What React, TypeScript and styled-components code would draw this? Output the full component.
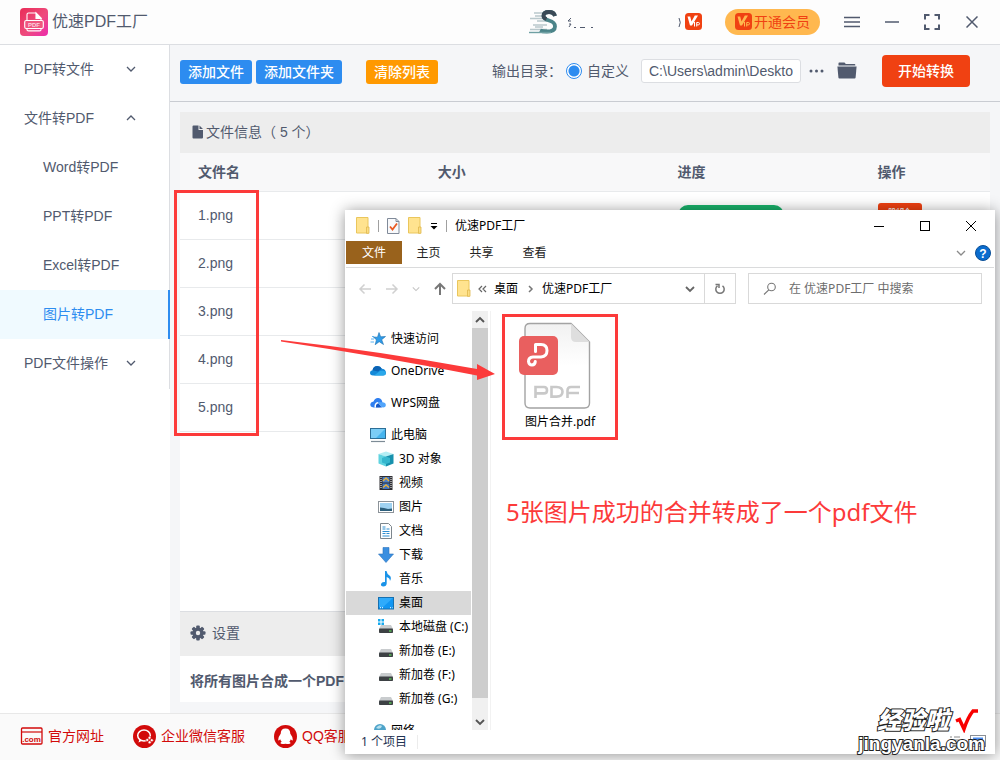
import React from "react";
import styled, { createGlobalStyle, css } from "styled-components";

const RED = "#fc3a3a";
const INK = "#515a6e";

const GlobalStyle = createGlobalStyle`
  *, *::before, *::after { box-sizing: border-box; }
  body {
    margin: 0;
    background: #f5f6f8;
    color: ${INK};
    font-family: "Liberation Sans", "Noto Sans CJK SC", sans-serif;
    font-size: 14px;
    line-height: 20px;
  }
  button, input { font: inherit; color: inherit; }
  button { background: none; border: 0; padding: 0; cursor: pointer; }
  svg { display: block; flex: none; }
  h1, h2, p, ul { margin: 0; padding: 0; font: inherit; }
  ul { list-style: none; }
`;

/* ---------- application shell ---------- */

const Shell = styled.div`
  position: relative;
  min-height: 100vh;
  display: flex;
  flex-direction: column;
  overflow: hidden;
`;

const TitleBar = styled.header`
  display: flex;
  align-items: center;
  height: 45px;
  padding: 0 8px 1px 20px;
  background: #fdfdfd;
  border-bottom: 1px solid #dcdee2;
`;

const AppName = styled.h1`
  margin-left: 4px;
  font-size: 16px;
  line-height: 24px;
`;

const Account = styled.div`
  display: flex;
  align-items: center;
  margin-left: auto;
`;

const VipButton = styled.button`
  display: flex;
  align-items: center;
  gap: 2px;
  height: 26px;
  margin: 0 12px 0 23px;
  padding: 0 10px;
  border-radius: 13px;
  background: #ffb84f;
  color: #f04112;
  white-space: nowrap;
`;

const WindowButton = styled.button<{ $w?: number; $ink?: string }>`
  display: flex;
  align-items: center;
  justify-content: center;
  width: ${(p) => p.$w ?? 40}px;
  height: 30px;
  color: ${(p) => p.$ink ?? INK};
`;

const Body = styled.div`
  flex: 1;
  display: flex;
`;

const Sidebar = styled.aside`
  width: 170px;
  flex: none;
  background: #fff;
`;

const Menu = styled.nav`
  height: 344px;
  border-right: 1px solid #dcdee2;
`;

const MenuGroup = styled.button`
  display: flex;
  align-items: center;
  justify-content: space-between;
  width: 100%;
  height: 49px;
  padding: 0 33px 2px 24px;
`;

const MenuLink = styled.a<{ $active?: boolean }>`
  display: flex;
  align-items: center;
  height: 49px;
  padding: 0 0 2px 43px;
  color: inherit;
  text-decoration: none;
  ${(p) =>
    p.$active &&
    css`
      margin-right: -1px;
      border-right: 2px solid #2d8cf0;
      background: #f0faff;
      color: #2d8cf0;
    `}
`;

const Main = styled.main`
  flex: 1;
  min-width: 0;
  display: flex;
  flex-direction: column;
`;

const Toolbar = styled.div`
  display: flex;
  align-items: center;
  height: 57px;
  padding: 0 30px 3px 10px;
  border-bottom: 1px solid #c9ccd2;
  white-space: nowrap;
`;

const Actions = styled.div`
  display: flex;
  gap: 4px;
  margin-right: 24px;
`;

const SmallButton = styled.button<{ $bg: string }>`
  height: 24px;
  padding: 0 8px;
  border-radius: 3px;
  background: ${(p) => p.$bg};
  color: #fff;
  font-weight: 500;
`;

const Output = styled.div`
  display: flex;
  align-items: center;
  margin-left: auto;
  padding-bottom: 2px;
`;

const RadioLabel = styled.label`
  display: flex;
  align-items: center;
  gap: 5px;
  margin: 0 12px 0 4px;
`;

const Radio = styled.input`
  appearance: none;
  width: 16px;
  height: 16px;
  margin: 0;
  border: 1px solid #2d8cf0;
  border-radius: 50%;
  background: radial-gradient(circle, #2d8cf0 5px, #fff 6px);
`;

const PathInput = styled.input`
  width: 160px;
  height: 24px;
  padding: 0 7px;
  border: 1px solid #dcdee2;
  border-radius: 3px;
  background: #fff;
  outline: 0;
`;

const IconButton = styled.button<{ $gap: number }>`
  margin-left: ${(p) => p.$gap}px;
`;

const StartButton = styled.button`
  height: 32px;
  margin-left: 25px;
  padding: 0 16px;
  border-radius: 4px;
  background: #f04112;
  color: #fff;
  font-weight: 500;
`;

const Panel = styled.section`
  flex: 1;
  display: flex;
  flex-direction: column;
  margin: 10px 10px 11px;
  background: #fff;
`;

const PanelHead = styled.h2<{ $h: number; $line?: boolean }>`
  display: flex;
  align-items: center;
  gap: ${(p) => (p.$line ? 6 : 2)}px;
  height: ${(p) => p.$h}px;
  padding: 0 0 2px ${(p) => (p.$line ? 10 : 12)}px;
  border-top: ${(p) => (p.$line ? "1px solid #dcdee2" : "0")};
  background: #ededed;
`;

const FileTable = styled.table`
  width: 100%;
  border-spacing: 0;
  table-layout: fixed;
`;

const Th = styled.th<{ $w?: string }>`
  width: ${(p) => p.$w ?? "auto"};
  height: 39px;
  padding: 0 0 0 18px;
  border-bottom: 1px solid #e8eaec;
  background: #f8f8f9;
  text-align: left;
`;

const Td = styled.td`
  height: 48px;
  padding: 0 0 2px 18px;
  border-bottom: 1px solid #e8eaec;
`;

const Progress = styled.div`
  width: 106px;
  height: 20px;
  border-radius: 10px;
  background: #19b26b;
`;

const DeleteButton = styled.button`
  display: block;
  height: 24px;
  padding: 0 10px;
  border-radius: 3px;
  background: #f04112;
  color: #fff;
  font-size: 12px;
`;

const Spacer = styled.div`
  flex: 1;
`;

const Option = styled.p`
  display: flex;
  align-items: center;
  height: 46px;
  padding: 4px 10px 0;
  font-weight: 700;
`;

const Footer = styled.footer`
  display: flex;
  align-items: center;
  gap: 29px;
  height: 47px;
  padding: 0 20px 2px;
  border-top: 1px solid #e8e8e8;
  background: #fafafa;
`;

const FooterLink = styled.a`
  display: flex;
  align-items: center;
  gap: 5px;
  color: #d20a0a;
  text-decoration: none;
`;

/* ---------- explorer window ---------- */

const Explorer = styled.section`
  position: absolute;
  left: 345px;
  right: 5px;
  top: 210px;
  bottom: 6px;
  display: flex;
  flex-direction: column;
  padding: 0 1px;
  background: #fff;
  box-shadow: 0 1px 14px rgba(0, 0, 0, 0.42);
  color: #000;
  font-family: "Noto Sans", "Noto Sans CJK SC", sans-serif;
  font-size: 12px;
  line-height: 16px;
`;

const ExplorerTitle = styled.header`
  display: flex;
  align-items: center;
  gap: 8px;
  height: 31px;
  padding-left: 10px;
`;

const Bar = styled.span`
  width: 1px;
  height: 12px;
  background: #a0a0a0;
`;

const WindowControls = styled.div`
  display: flex;
  margin-left: auto;
`;

const Ribbon = styled.div`
  display: flex;
  align-items: center;
  height: 27px;
  padding-bottom: 3px;
  border-bottom: 1px solid #dadbdc;
`;

const RibbonTab = styled.button<{ $file?: boolean }>`
  width: ${(p) => (p.$file ? 56 : 53)}px;
  height: 23px;
  background: ${(p) => (p.$file ? "#99621c" : "transparent")};
  color: ${(p) => (p.$file ? "#fff" : "#222")};
`;

const RibbonEnd = styled.div`
  display: flex;
  align-items: center;
  gap: 9px;
  margin-left: auto;
  padding-right: 3px;
`;

const AddressRow = styled.div`
  display: flex;
  align-items: center;
  height: 41px;
  padding: 0 12px 0 10px;
`;

const NavButtons = styled.div`
  display: flex;
  align-items: center;
  gap: 13px;
  width: 92px;
  margin-right: 4px;
  padding-left: 2px;
`;

const Address = styled.div`
  display: flex;
  flex: 1;
  align-items: center;
  gap: 7px;
  height: 31px;
  padding-left: 4px;
  border: 1px solid #d9d9d9;
`;

const Refresh = styled.button`
  display: flex;
  align-items: center;
  justify-content: center;
  width: 31px;
  height: 29px;
  margin-left: 2px;
  border-left: 1px solid #d9d9d9;
`;

const SearchBox = styled.label`
  display: flex;
  align-items: center;
  gap: 12px;
  width: 234px;
  height: 31px;
  margin-left: 12px;
  padding-left: 14px;
  border: 1px solid #d9d9d9;
`;

const SearchInput = styled.input`
  flex: 1;
  min-width: 0;
  border: 0;
  padding: 0;
  outline: 0;
  &::placeholder {
    color: #6d6d6d;
    opacity: 1;
  }
`;

const ExplorerBody = styled.div`
  flex: 1;
  min-height: 0;
  display: flex;
  padding-top: 2px;
`;

const Tree = styled.ul`
  width: 125px;
  height: 419px;
  padding-top: 16px;
  overflow: hidden;
`;

const TreeItem = styled.li<{ $child?: boolean; $gap?: boolean; $on?: boolean }>`
  display: flex;
  align-items: center;
  gap: 5px;
  height: 24px;
  margin-bottom: ${(p) => (p.$gap ? 8 : 0)}px;
  padding-left: ${(p) => (p.$child ? 32 : 24)}px;
  background: ${(p) => (p.$on ? "#d9d9d9" : "transparent")};
  white-space: nowrap;
`;

const ScrollTrack = styled.div`
  display: flex;
  flex-direction: column;
  width: 16px;
  height: 419px;
  margin: 0 2px 0 1px;
  background: #f0f0f0;
`;

const ScrollArrow = styled.button`
  display: flex;
  align-items: center;
  justify-content: center;
  height: 17px;
`;

const ScrollThumb = styled.div`
  flex: 1;
  margin-bottom: 15px;
  background: #cdcdcd;
`;

const Files = styled.div`
  flex: 1;
  padding: 3px 12px 0 11px;
  border-left: 1px solid #f2f2f2;
`;

const FileCard = styled.figure`
  display: flex;
  flex-direction: column;
  align-items: center;
  gap: 4px;
  width: 116px;
  height: 126px;
  margin: 0;
  padding-top: 5px;
  border: 3px solid ${RED};
`;

const Remark = styled.p`
  margin: 54px 0 0 4px;
  color: ${RED};
  font-size: 24px;
  line-height: 36px;
`;

const StatusBar = styled.footer`
  display: flex;
  align-items: center;
  gap: 10px;
  height: 24px;
  padding: 0 15px;
  color: #1f3352;
`;

const StatusRule = styled.span`
  width: 1px;
  height: 14px;
  background: #ececec;
`;

/* ---------- markings lying over the page ---------- */

const MarkBox = styled.div`
  position: absolute;
  left: 174px;
  top: 190px;
  width: 85px;
  height: 246px;
  border: 3px solid ${RED};
`;

const MarkArrow = styled.svg`
  position: absolute;
  left: 278px;
  top: 336px;
`;

const Watermark = styled.div`
  position: absolute;
  right: 15px;
  bottom: 6px;
  display: flex;
  flex-direction: column;
  align-items: flex-end;
  color: #fff;
  font-weight: 900;
  -webkit-text-stroke: 2px #222;
  paint-order: stroke fill;
`;

const WatermarkTop = styled.div`
  display: flex;
  align-items: center;
  gap: 6px;
  padding-right: 6px;
  font-size: 24px;
  line-height: 26px;
  font-style: italic;
`;

const WatermarkUrl = styled.div`
  font-size: 19px;
  line-height: 20px;
`;

const ViewSwitch = styled.svg`
  position: absolute;
  right: 9px;
  bottom: 7px;
`;

/* ---------- icons ---------- */

const Chevron = ({ up, size = 10, color = INK, w = 1.3 }: { up?: boolean; size?: number; color?: string; w?: number }) => (
  <svg width={size} height={size} viewBox="0 0 10 10" fill="none" stroke={color} strokeWidth={w}>
    <path d={up ? "M1 7l4-4 4 4" : "M1 3l4 4 4-4"} />
  </svg>
);

const Logo = () => (
  <svg width="28" height="28" viewBox="0 0 28 28">
    <defs>
      <linearGradient id="lg" x1="0" y1="0" x2="1" y2="1">
        <stop offset="0" stopColor="#e92c57" />
        <stop offset=".55" stopColor="#ee4b7d" />
        <stop offset="1" stopColor="#ec2cae" />
      </linearGradient>
    </defs>
    <rect width="28" height="28" rx="4" fill="url(#lg)" />
    <g fill="none" stroke="#fff" strokeWidth="1.1">
      <path d="M7 12V6.5Q7 5 8.5 5H16l5 5v2" />
      <path d="M16 5l5 5.500h-5z" fill="#fff" />
      <rect x="4.700" y="12.500" width="18.600" height="8" rx="1.500" fill="#f0567f" />
      <path d="M7 20.500v1.200q0 1.200 1.500 1.200h11q1.500 0 1.500-1.200v-1.200" />
    </g>
    <text x="14" y="18.800" fontSize="6" fontWeight="700" textAnchor="middle" fill="#fbd3df" fontFamily="Liberation Sans">PDF</text>
  </svg>
);

const Avatar = () => (
  <svg width="30" height="30" viewBox="0 0 30 30" fill="none">
    <path d="M5 6h13M1 11.500h15M6 9h9M8 14h10M4 18h14M1 22.500h17M6 20h8" stroke="#b9c8cc" strokeWidth="1.300" />
    <path d="M26 9q-1-4-6-4-5.500 0-5.500 4 0 3 5.500 4.500 6 1.500 6 6 0 5-8 5-5 0-7-1" stroke="#4b8489" strokeWidth="3.800" />
    <path d="M26 9q-1-4-6-4-5.500 0-5.500 4 0 2 3 3" stroke="#3a4a57" strokeWidth="3.800" />
    <path d="M0 25.500h22" stroke="#6fa0a3" strokeWidth="1.400" />
  </svg>
);

const UserName = () => (
  <svg width="126" height="20" viewBox="0 0 126 20" fill="none" stroke={INK} strokeWidth="1">
    <path d="M12 6l-3 3M9 9h3M10 12h2l-2 3M15 15.500h2M21 15.500h5M32 15.500h2" />
    <path d="M120 6q2.500 4.500 0 9" />
  </svg>
);

const VipMark = ({ fg = "#fff" }: { fg?: string }) => (
  <svg width="17" height="17" viewBox="0 0 17 17">
    <rect width="17" height="17" rx="3.500" fill="#f04112" />
    <path d="M2.500 3.500h2.700l1.300 5L9.800 2.500H13L7 12.500H5z" fill={fg} />
    <path d="M9.500 9v4.500M11.700 13.500V9.500h1.600q1.200 0 1.200 1.200t-1.200 1.200h-1.600" stroke={fg} strokeWidth="1" fill="none" />
  </svg>
);

const FolderDark = () => (
  <svg width="20" height="17" viewBox="0 0 20 17" fill={INK}>
    <path d="M1.500 3V1.200Q1.500.5 2.200.5h5.300l1.300 1.500h8.700q.8 0 .8.800V3.500H1.500z" />
    <path d="M.4 4.500h19.200l-1 11q-.1 1-1 1H2.400q-.9 0-1-1z" />
  </svg>
);

const DocSolid = () => (
  <svg width="12" height="14" viewBox="0 0 12 14" fill={INK}>
    <path d="M1.500.500h5v4.500h4.500v7.500q0 1-1 1H1.500q-1 0-1-1v-11q0-1 1-1zM7.500.500L11 4H7.500z" />
  </svg>
);

const Gear = () => (
  <svg width="16" height="16" viewBox="0 0 16 16">
    <g fill={INK}>
      <circle cx="8" cy="8" r="5.500" />
      {[0, 45, 90, 135].map((a) => (
        <rect key={a} x="6.200" y="0.500" width="3.600" height="15" rx="1" transform={`rotate(${a} 8 8)`} />
      ))}
    </g>
    <circle cx="8" cy="8" r="2.200" fill="#ededed" />
  </svg>
);

const ComIcon = () => (
  <svg width="23" height="18" viewBox="0 0 23 18">
    <rect x="1.500" y="1" width="20.500" height="16" rx="1" fill="none" stroke="#d20a0a" strokeWidth="1.300" />
    <path d="M1.500 5h20.500" stroke="#d20a0a" strokeWidth="1.200" />
    <text x="11.500" y="14.500" fontSize="8" fontWeight="700" textAnchor="middle" fill="#d20a0a" fontFamily="Liberation Sans">.com</text>
  </svg>
);

const WeComIcon = () => (
  <svg width="23" height="23" viewBox="0 0 23 23">
    <circle cx="11.500" cy="11.500" r="11.500" fill="#d20a0a" />
    <ellipse cx="11" cy="10.500" rx="6.300" ry="5.500" fill="none" stroke="#fff" strokeWidth="1.500" />
    <path d="M6.500 14l-1 3.500 3.500-1.800z" fill="#fff" />
    <g fill="#fff" stroke="#d20a0a" strokeWidth=".6">
      <circle cx="16.500" cy="12.800" r="1.500" />
      <circle cx="14.200" cy="15" r="1.500" />
      <circle cx="18.800" cy="15.200" r="1.500" />
      <circle cx="16.600" cy="17.300" r="1.500" />
    </g>
  </svg>
);

const QQIcon = () => (
  <svg width="23" height="23" viewBox="0 0 23 23">
    <circle cx="11.500" cy="11.500" r="11.500" fill="#d20a0a" />
    <path
      d="M11.500 3.500q-4.800 0-4.800 5.300-2.500 3.200-2.500 6 0 1.700 2-.600.500 1.800 1.500 2.600-1.500.600-1.200 1.500.400 1.200 5 .500 4.600.700 5-.500.300-.900-1.200-1.500 1-.800 1.500-2.600 2 2.300 2 .600 0-2.800-2.500-6 0-5.300-4.800-5.300z"
      fill="#fff"
    />
  </svg>
);

const YellowFolder = () => (
  <svg width="14" height="17" viewBox="0 0 14 17">
    <path d="M.5.500h11.500v15.500H.5z" fill="#ffe38f" stroke="#eac65c" />
    <path d="M10.500 10h2.500v6.300h-2.500z" fill="#fbdd84" stroke="#dfb84b" strokeWidth=".8" />
  </svg>
);

const CheckDoc = () => (
  <svg width="13" height="16" viewBox="0 0 13 16" fill="none">
    <path d="M.5.500h8.500l3 3v12H.5z" fill="#f8f9fb" stroke="#808a99" />
    <path d="M9 .500v3h3" stroke="#808a99" />
    <path d="M3 8.500l2.500 3 4.500-6" stroke="#ea5a22" strokeWidth="1.800" />
  </svg>
);

const Arrow = ({ kind, color }: { kind: "left" | "right" | "up"; color: string }) => {
  const d = {
    left: "M13 7H2M6.500 2.500L2 7l4.500 4.500",
    right: "M1 7h11M7.500 2.500L12 7l-4.500 4.500",
    up: "M7 13V2M2 7L7 2l5 5",
  }[kind];
  return (
    <svg width="14" height="14" viewBox="0 0 14 14" fill="none" stroke={color} strokeWidth={kind === "up" ? 2 : 1.500}>
      <path d={d} />
    </svg>
  );
};

const drive = (
  <>
    <path d="M3 6h10l2 4H1z" fill="#c9ccce" />
    <rect x="1" y="9.500" width="14" height="4.500" rx=".8" fill="#3d4144" />
    <path d="M11 12h2.500" stroke="#5fdc5a" strokeWidth="1.200" />
  </>
);

const treeIcons: Record<string, React.ReactNode> = {
  star: (
    <>
      <path d="M9 1.500l1.700 4.300 4.800-.300-3.800 3.200 1.800 4.800-4.300-2.800-4 3 1.200-4.800L3.500 6l4 .2z" fill="#2f9be8" stroke="#1b6fae" strokeWidth=".6" />
      <path d="M1 8h3M.5 11h3.500M2 5.500h2" stroke="#5cb3f0" />
    </>
  ),
  onedrive: (
    <>
      <path d="M3 12.500Q0 12.500 0 9.800 0 7.500 2.500 7.200 3.500 3 7.500 3q3 0 4.300 2.800Q15.500 6 16 9.500q0 3-3 3z" fill="#1489d8" />
      <path d="M2.500 7.200Q3.500 3 7.500 3q3 0 4.300 2.800L8 8.500z" fill="#0c63b4" />
      <path d="M4 12.500l6-4.500q5-1 6 1.800 0 2.700-3 2.700z" fill="#2aa8ea" />
    </>
  ),
  wps: (
    <>
      <path d="M3.500 12.500Q0 12 .3 9 1 6.500 3.500 6.500 5 2.500 8.500 3q3.500.5 4 5l-3 4.500z" fill="#2f7ff0" />
      <path d="M4.500 12.500Q4 7.500 8 7l4.500 5.500z" fill="#fff" />
      <path d="M6 12.500Q5.500 8.500 8.500 8.200l3.500 4.300z" fill="#1659c8" />
      <path d="M8 7q1.500-.8 2.800.3 4.800-.8 5 2.500.2 2.700-2.800 2.700-2.200 0-3.300-2.700z" fill="#52a5fb" />
    </>
  ),
  pc: (
    <>
      <rect x=".5" y="1.500" width="15" height="10" fill="#46b4ee" stroke="#2c6e96" />
      <path d="M1 2h14L6 11H1z" fill="#7bcdf6" />
      <path d="M1 14.500h14" stroke="#7d8b96" strokeWidth="1.200" />
    </>
  ),
  cube: (
    <>
      <path d="M8 .5l7.500 2.500L8 5.500.5 3z" fill="#b4eef4" />
      <path d="M.5 3L8 5.500v10L.5 12.500z" fill="#5fd3e0" />
      <path d="M15.500 3L8 5.500v10l7.500-3z" fill="#1791ad" />
      <path d="M8 5.500L4 7v4.500l4 1.500 4-1.500V7z" fill="#35b6cd" />
    </>
  ),
  film: (
    <>
      <rect x="1.500" y="1" width="13" height="14" fill="#2e2e33" />
      <rect x="4.500" y="2" width="7" height="5.500" fill="#4a7ec9" />
      <rect x="4.500" y="8.500" width="7" height="5.500" fill="#3f74c2" />
      <path d="M5 6l3-3 3 3M5 12.500l3-2.500 3 2.500" stroke="#e8b23a" strokeWidth="1.400" fill="none" />
      <path d="M3 2v12M13 2v12" stroke="#fff" strokeDasharray="1 1" />
    </>
  ),
  photo: (
    <>
      <rect x=".5" y="2.500" width="15" height="11" fill="#fff" stroke="#8c9399" />
      <rect x="2" y="4" width="12" height="8" fill="#9fd2f1" />
      <path d="M2 8.500l4 .5 4 1 4-.500V12H2z" fill="#2c5f7c" />
    </>
  ),
  doc: (
    <>
      <path d="M2.500.500h8l3 3v12h-11z" fill="#fff" stroke="#7d868d" />
      <path d="M4.500 4h3M8.500 6h3M4.500 6h3M4.500 8.500h7M4.500 10.500h3M8.500 10.500h3M4.500 13h7" stroke="#2f8fd2" strokeWidth="1.200" />
    </>
  ),
  down: <path d="M5 .5h6V7h4.500L8 15.500.5 7H5z" fill="#3a8fe0" stroke="#2c74bd" strokeWidth=".6" />,
  music: <path d="M7 0h1.500q.5 3 3 4.500 2.500 2 .5 5.500 0-3-3.300-4v6.500q-.2 3-3.400 3-2.800-.2-2.300-2.500.8-2.500 4-2z" fill="#1a93e8" />,
  desk: (
    <>
      <rect x=".5" y="2.500" width="15" height="11.500" fill="#1296f2" stroke="#1670b0" />
      <path d="M1 3h14L5 12H1z" fill="#2fabfb" />
      <path d="M2 12.700h3M12 12.700h2.500" stroke="#fff" strokeDasharray="1 1" />
    </>
  ),
  winDrive: (
    <>
      {drive}
      <path d="M0 0h2.500v2.500H0zM3.500 0H6v2.500H3.500zM0 3.500h2.500V6H0zM3.500 3.500H6V6H3.500z" fill="#17a9ee" />
    </>
  ),
  drive,
  net: (
    <>
      <circle cx="10" cy="7" r="6" fill="#4da3c9" />
      <path d="M6 5q3-4 6-2-1 4-6 2z" fill="#b7e0ee" />
      <path d="M0 8h8v5H0z" fill="#3b6f94" />
    </>
  ),
};

const TreeIcon = ({ name }: { name: string }) => (
  <svg width="16" height="16" viewBox="0 0 16 16">{treeIcons[name]}</svg>
);

const PdfFileIcon = () => (
  <svg width="84" height="88" viewBox="0 0 84 88" fill="none">
    <defs>
      <linearGradient id="fold" x1="0" y1="0" x2="0" y2="1">
        <stop offset="0" stopColor="#f1f1f1" />
        <stop offset=".5" stopColor="#fff" />
      </linearGradient>
    </defs>
    <path d="M12 1.500h41L71.500 20v61q0 5-5 5H12q-5 0-5-5V6.500q0-5 5-5z" fill="url(#fold)" stroke="#a3a3a3" strokeWidth="1.400" />
    <path d="M53 1.500L71.500 20H58q-5 0-5-5z" fill="#dedede" />
    <rect x="1" y="14" width="39" height="39" rx="5" fill="#e95f5f" />
    <path
      d="M17.500 29.500V22.500h5.500q6 0 6 6t-6 6.500h-8q-4.500.5-4.500 4.500.5 3.500 3.500 3.500 3-.3 3.300-3.500"
      stroke="#fff"
      strokeWidth="3"
      strokeLinecap="round"
      strokeLinejoin="round"
    />
    <path
      d="M17.500 76V65H26q3 0 3 3.200t-3 3.200h-8.500M33.500 65h5q6 0 6 4.800t-6 4.800h-5zM49.500 76v-7.500q0-3.500 3.500-3.500h9M50 71h11"
      stroke="#c9c9c9"
      strokeWidth="2.600"
    />
  </svg>
);

/* ---------- data ---------- */

const files = ["1.png", "2.png", "3.png", "4.png", "5.png"];

const tree: { icon: string; label: string; child?: boolean; gap?: boolean; on?: boolean }[] = [
  { icon: "star", label: "快速访问", gap: true },
  { icon: "onedrive", label: "OneDrive", gap: true },
  { icon: "wps", label: "WPS网盘", gap: true },
  { icon: "pc", label: "此电脑" },
  { icon: "cube", label: "3D 对象", child: true },
  { icon: "film", label: "视频", child: true },
  { icon: "photo", label: "图片", child: true },
  { icon: "doc", label: "文档", child: true },
  { icon: "down", label: "下载", child: true },
  { icon: "music", label: "音乐", child: true },
  { icon: "desk", label: "桌面", child: true, on: true },
  { icon: "winDrive", label: "本地磁盘 (C:)", child: true },
  { icon: "drive", label: "新加卷 (E:)", child: true },
  { icon: "drive", label: "新加卷 (F:)", child: true },
  { icon: "drive", label: "新加卷 (G:)", child: true, gap: true },
  { icon: "net", label: "网络" },
];

/* ---------- page ---------- */

function ExplorerWindow() {
  return (
    <Explorer>
      <ExplorerTitle>
        <YellowFolder />
        <Bar />
        <CheckDoc />
        <YellowFolder />
        <svg width="8" height="8" viewBox="0 0 8 8">
          <path d="M1 1.500h6" stroke="#000" />
          <path d="M.5 4h7L4 7.500z" />
        </svg>
        <Bar />
        <span>优速PDF工厂</span>
        <WindowControls>
          <WindowButton $w={46} $ink="#000" aria-label="最小化">
            <svg width="10" height="10" stroke="currentColor"><path d="M0 5.500h10" /></svg>
          </WindowButton>
          <WindowButton $w={46} $ink="#000" aria-label="最大化">
            <svg width="10" height="10" stroke="currentColor" fill="none"><rect x=".5" y=".5" width="9" height="9" /></svg>
          </WindowButton>
          <WindowButton $w={46} $ink="#000" aria-label="关闭">
            <svg width="10" height="10" stroke="currentColor"><path d="M0 0l10 10M10 0L0 10" /></svg>
          </WindowButton>
        </WindowControls>
      </ExplorerTitle>
      <Ribbon>
        <RibbonTab $file>文件</RibbonTab>
        <RibbonTab>主页</RibbonTab>
        <RibbonTab>共享</RibbonTab>
        <RibbonTab>查看</RibbonTab>
        <RibbonEnd>
          <Chevron color="#8a8a8a" />
          <svg width="16" height="16" viewBox="0 0 16 16">
            <circle cx="8" cy="8" r="7.500" fill="#0a6cce" stroke="#0a4f97" />
            <text x="8" y="12.500" fontSize="12" fontWeight="700" textAnchor="middle" fill="#fff" fontFamily="Liberation Sans">?</text>
          </svg>
        </RibbonEnd>
      </Ribbon>
      <AddressRow>
        <NavButtons>
          <Arrow kind="left" color="#d0d0d0" />
          <Arrow kind="right" color="#d0d0d0" />
          <Chevron size={8} color="#c4c4c4" />
          <Arrow kind="up" color="#777" />
        </NavButtons>
        <Address>
          <YellowFolder />
          <svg width="9" height="8" viewBox="0 0 9 8" fill="none" stroke="#666" strokeWidth="1.200">
            <path d="M4 1L1 4l3 3M8 1L5 4l3 3" />
          </svg>
          <span>桌面</span>
          <svg width="10" height="8" viewBox="0 0 10 8" fill="none" stroke="#777" strokeWidth="1.500">
            <path d="M4 1l3 3-3 3" />
          </svg>
          <span>优速PDF工厂</span>
          <Spacer />
          <Chevron size={10} color="#666" w={1.800} />
          <Refresh aria-label="刷新">
            <svg width="12" height="12" viewBox="0 0 12 12" fill="none" stroke="#777" strokeWidth="1.500">
              <path d="M3.500 2.800a4.200 4.200 0 1 0 5 0M1.500 1.500h3.500v3.500" />
            </svg>
          </Refresh>
        </Address>
        <SearchBox>
          <svg width="14" height="14" viewBox="0 0 14 14" fill="none" stroke="#777" strokeWidth="1.100">
            <circle cx="8.500" cy="5" r="3.800" />
            <path d="M5.800 7.800L1 12.500" />
          </svg>
          <SearchInput aria-label="搜索" placeholder="在 优速PDF工厂 中搜索" />
        </SearchBox>
      </AddressRow>
      <ExplorerBody>
        <Tree>
          {tree.map((t) => (
            <TreeItem key={t.label} $child={t.child} $gap={t.gap} $on={t.on}>
              <TreeIcon name={t.icon} />
              {t.label}
            </TreeItem>
          ))}
        </Tree>
        <ScrollTrack>
          <ScrollArrow aria-label="向上滚动"><Chevron up color="#555" w={1.900} /></ScrollArrow>
          <ScrollThumb />
          <ScrollArrow aria-label="向下滚动"><Chevron color="#555" w={1.900} /></ScrollArrow>
        </ScrollTrack>
        <Files>
          <FileCard>
            <PdfFileIcon />
            <figcaption>图片合并.pdf</figcaption>
          </FileCard>
          <Remark>5张图片成功的合并转成了一个pdf文件</Remark>
        </Files>
      </ExplorerBody>
      <StatusBar>
        1 个项目
        <StatusRule />
      </StatusBar>
      <ViewSwitch width="38" height="12" viewBox="0 0 38 12" fill="none">
        <path d="M2 2h2M6 2h6M2 5h2M6 5h6M2 8h2M6 8h6" stroke="#888" />
        <rect x="22.500" y=".5" width="15" height="11" stroke="#8a8f96" />
        <rect x="25" y="2.500" width="10" height="7" fill="#4f8ff0" />
      </ViewSwitch>
    </Explorer>
  );
}

export default function App() {
  return (
    <Shell>
      <GlobalStyle />
      <TitleBar>
        <Logo />
        <AppName>优速PDF工厂</AppName>
        <Account>
          <Avatar />
          <UserName />
          <VipMark />
          <VipButton>
            <VipMark fg="#ffb84f" />
            开通会员
          </VipButton>
          <WindowButton aria-label="菜单">
            <svg width="16" height="12" stroke="currentColor" strokeWidth="1.500"><path d="M0 1.500h16M0 6h16M0 10.500h16" /></svg>
          </WindowButton>
          <WindowButton aria-label="最小化">
            <svg width="14" height="12" stroke="currentColor" strokeWidth="1.500"><path d="M0 6h14" /></svg>
          </WindowButton>
          <WindowButton aria-label="全屏">
            <svg width="16" height="16" stroke="currentColor" strokeWidth="2" fill="none">
              <path d="M1 5.500V1h4.500M10.500 1H15v4.500M15 10.500V15h-4.500M5.500 15H1v-4.500" />
            </svg>
          </WindowButton>
          <WindowButton aria-label="关闭">
            <svg width="12" height="12" stroke="currentColor" strokeWidth="1.500"><path d="M.5.500l11 11M11.500.500l-11 11" /></svg>
          </WindowButton>
        </Account>
      </TitleBar>

      <Body>
        <Sidebar>
          <Menu>
            <MenuGroup>PDF转文件<Chevron /></MenuGroup>
            <MenuGroup>文件转PDF<Chevron up /></MenuGroup>
            <MenuLink href="#word">Word转PDF</MenuLink>
            <MenuLink href="#ppt">PPT转PDF</MenuLink>
            <MenuLink href="#excel">Excel转PDF</MenuLink>
            <MenuLink href="#image" $active>图片转PDF</MenuLink>
            <MenuGroup>PDF文件操作<Chevron /></MenuGroup>
          </Menu>
        </Sidebar>

        <Main>
          <Toolbar>
            <Actions>
              <SmallButton $bg="#2d8cf0">添加文件</SmallButton>
              <SmallButton $bg="#2d8cf0">添加文件夹</SmallButton>
            </Actions>
            <SmallButton $bg="#ff9900">清除列表</SmallButton>
            <Output>
              <span>输出目录：</span>
              <RadioLabel>
                <Radio type="radio" name="target" defaultChecked />
                自定义
              </RadioLabel>
              <PathInput aria-label="输出路径" defaultValue="C:\Users\admin\Deskto" />
              <IconButton $gap={8} aria-label="更多">
                <svg width="15" height="4" fill={INK}>
                  <circle cx="2" cy="2" r="1.500" /><circle cx="7.500" cy="2" r="1.500" /><circle cx="13" cy="2" r="1.500" />
                </svg>
              </IconButton>
              <IconButton $gap={13} aria-label="打开目录"><FolderDark /></IconButton>
              <StartButton>开始转换</StartButton>
            </Output>
          </Toolbar>

          <Panel>
            <PanelHead $h={41}><DocSolid />文件信息（ 5 个）</PanelHead>
            <FileTable>
              <thead>
                <tr>
                  <Th $w="29.6%">文件名</Th>
                  <Th $w="29.6%">大小</Th>
                  <Th $w="24.7%">进度</Th>
                  <Th>操作</Th>
                </tr>
              </thead>
              <tbody>
                {files.map((f, i) => (
                  <tr key={f}>
                    <Td>{f}</Td>
                    <Td />
                    <Td>{i === 0 && <Progress />}</Td>
                    <Td>{i === 0 && <DeleteButton>删除</DeleteButton>}</Td>
                  </tr>
                ))}
              </tbody>
            </FileTable>
            <Spacer />
            <PanelHead $h={45} $line><Gear />设置</PanelHead>
            <Option>将所有图片合成一个PDF</Option>
          </Panel>
        </Main>
      </Body>

      <Footer>
        <FooterLink href="#site"><ComIcon />官方网址</FooterLink>
        <FooterLink href="#wecom"><WeComIcon />企业微信客服</FooterLink>
        <FooterLink href="#qq"><QQIcon />QQ客服</FooterLink>
      </Footer>

      <ExplorerWindow />

      <MarkBox />
      <MarkArrow width="218" height="48" viewBox="0 0 218 48" fill={RED}>
        <path d="M3 4Q100 15 199 33L199 28 217 38 199 44 199 39.500Q100 20 3 5.500z" />
      </MarkArrow>
      <Watermark>
        <WatermarkTop>
          经验啦
          <svg width="24" height="24" viewBox="0 0 24 24" fill="none" stroke="#f80000" strokeWidth="3.500">
            <path d="M1 12l3.500-1.500L9 20Q13 8 18 2h5" />
          </svg>
        </WatermarkTop>
        <WatermarkUrl>jingyanla.com</WatermarkUrl>
      </Watermark>
    </Shell>
  );
}
